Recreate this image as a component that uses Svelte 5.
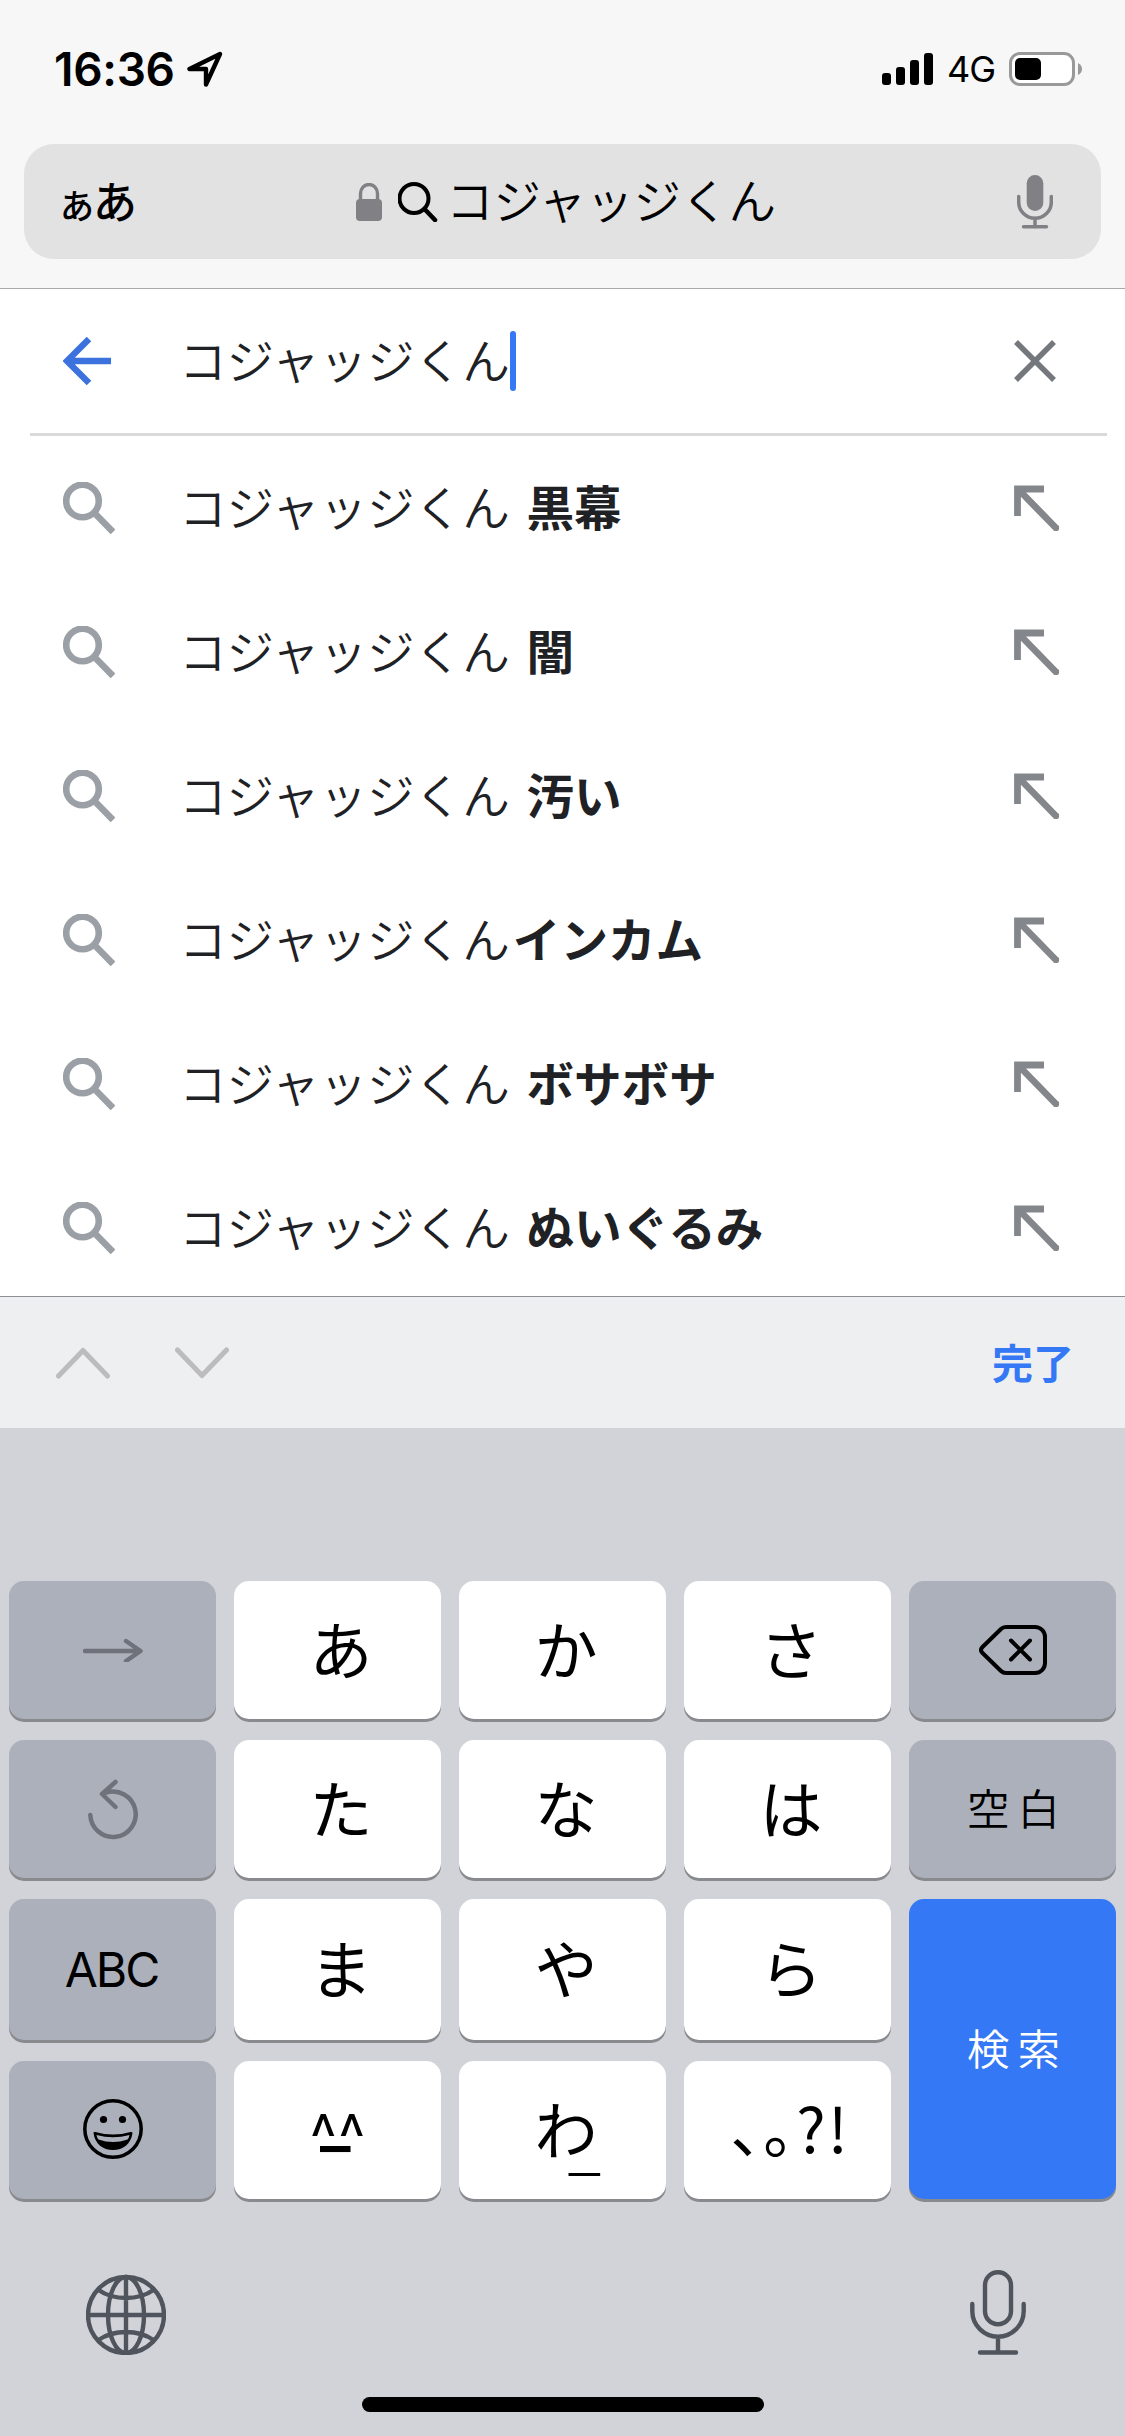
<script lang="ts">
interface Suggestion {
  base: string
  extra: string
}

interface Key {
  label?: string
  icon?: 'next' | 'undo' | 'emoji' | 'delete'
  sub?: string
  kind: 'kana' | 'gray' | 'blue'
  style?: 'abc' | 'word' | 'face' | 'punct'
}

const query = 'コジャッジくん'

const suggestions: Suggestion[] = [
  { base: 'コジャッジくん ', extra: '黒幕' },
  { base: 'コジャッジくん ', extra: '闇' },
  { base: 'コジャッジくん ', extra: '汚い' },
  { base: 'コジャッジくん', extra: 'インカム' },
  { base: 'コジャッジくん ', extra: 'ボサボサ' },
  { base: 'コジャッジくん ', extra: 'ぬいぐるみ' },
]

const keys: Key[] = [
  { icon: 'next', kind: 'gray' },
  { label: 'あ', kind: 'kana' },
  { label: 'か', kind: 'kana' },
  { label: 'さ', kind: 'kana' },
  { icon: 'delete', kind: 'gray' },
  { icon: 'undo', kind: 'gray' },
  { label: 'た', kind: 'kana' },
  { label: 'な', kind: 'kana' },
  { label: 'は', kind: 'kana' },
  { label: '空白', kind: 'gray', style: 'word' },
  { label: 'ABC', kind: 'gray', style: 'abc' },
  { label: 'ま', kind: 'kana' },
  { label: 'や', kind: 'kana' },
  { label: 'ら', kind: 'kana' },
  { label: '検索', kind: 'blue', style: 'word' },
  { icon: 'emoji', kind: 'gray' },
  { label: '^^', sub: '_', kind: 'kana', style: 'face' },
  { label: 'わ', sub: '_', kind: 'kana' },
  { label: '、。?!', kind: 'kana', style: 'punct' },
]

const bars = [12, 18, 25, 32]
</script>

<div class="screen">
	<header class="browser">
		<div class="status">
			<span class="time">16:36</span>
			<svg class="location" width="36" height="36" viewBox="0 0 36 36">
				<path d="M33 3L2.5 18H19V33.5Z" />
			</svg>
			<div class="signal">
				{#each bars as height}
					<i style="height: {height}px"></i>
				{/each}
			</div>
			<span class="network">4G</span>
			<svg class="battery" width="74" height="34" viewBox="0 0 74 34">
				<rect x="1.5" y="1.5" width="63" height="31" rx="9.5" fill="#fff" stroke="#999" stroke-width="3" />
				<rect x="6" y="6" width="26" height="22" rx="5" />
				<path d="M69 11Q73 13 73 17T69 23Z" fill="#999" />
			</svg>
		</div>
		<div class="address">
			<span class="reader"><small>あ</small>あ</span>
			<div class="page-title">
				<svg width="26" height="38" viewBox="0 0 26 38">
					<rect y="16" width="26" height="22" rx="4" fill="#808085" />
					<path d="M4.5 17V10.5a8.5 9 0 0 1 17 0V17" fill="none" stroke="#808085" stroke-width="3.4" />
				</svg>
				<svg width="40" height="40" viewBox="0 0 40 40">
					<circle cx="16" cy="16.5" r="14.5" fill="none" stroke="#000" stroke-width="4" />
					<path d="M26.5 27L37 38" stroke="#000" stroke-width="4.6" stroke-linecap="round" />
				</svg>
				<span>{query}</span>
			</div>
			<svg class="voice" width="36" height="54" viewBox="0 0 36 54">
				<rect x="9.7" width="16.6" height="36" rx="8.3" fill="#808085" />
				<path d="M1.7 21.5V27a16.3 16.3 0 0 0 32.6 0V21.5M18 43V52M6.5 51.7H29.5" />
			</svg>
		</div>
	</header>

	<main>
		<div class="search-row">
			<svg class="back" width="48" height="48" viewBox="0 0 48 48">
				<path d="M48 24H4M26 2L4 24L26 46" />
			</svg>
			<span class="query">{query}</span><span class="caret"></span>
			<svg class="clear" width="42" height="42" viewBox="0 0 42 42">
				<path d="M2 2L40 40M40 2L2 40" />
			</svg>
		</div>
		<ul>
			{#each suggestions as item}
				<li>
					<svg class="lens" width="52" height="52" viewBox="0 0 52 52">
						<circle cx="19.5" cy="19" r="16.3" />
						<path d="M31 30.5L50 50" />
					</svg>
					<span class="suggestion">{item.base}<b>{item.extra}</b></span>
					<svg class="fill" width="46" height="46" viewBox="0 0 46 46">
						<path d="M30 4H3.5V31M4 4L42 43" />
						<circle cx="42" cy="43" r="3.2" />
					</svg>
				</li>
			{/each}
		</ul>
	</main>

	<div class="toolbar">
		<svg width="54" height="32" viewBox="0 0 54 32"><path d="M2.5 29L27 3.5L51.5 29" /></svg>
		<svg width="54" height="32" viewBox="0 0 54 32"><path d="M2.5 3L27 28.5L51.5 3" /></svg>
		<span class="done">完了</span>
	</div>

	<div class="keyboard">
		<div class="keys">
			{#each keys as key}
				<div class="key {key.kind} {key.style ?? ''}">
					{#if key.icon === 'next'}
						<svg class="dim" width="60" height="24" viewBox="0 0 60 24">
							<path d="M2 13H57M43 3L57.5 13L43 23" />
						</svg>
					{:else if key.icon === 'undo'}
						<svg class="dim" width="50" height="62" viewBox="0 0 50 62">
							<path d="M2.3 37a22.7 22.7 0 1 0 15.5-22.3M27.5 4L14 16L27.5 29" />
						</svg>
					{:else if key.icon === 'delete'}
						<svg class="dark" width="68" height="52" viewBox="0 -1 68 52">
							<path d="M27 2H56a10 10 0 0 1 10 10V38a10 10 0 0 1-10 10H27q-3 0-5-2L3.5 28q-3-3 0-6L22 4q2-2 5-2ZM32 15.5L51 34.5M51 15.5L32 34.5" />
						</svg>
					{:else if key.icon === 'emoji'}
						<svg width="60" height="62" viewBox="0 0 60 62">
							<circle cx="30" cy="30" r="28.2" fill="none" stroke="#000" stroke-width="3.5" />
							<circle cx="20.5" cy="20.5" r="3.6" />
							<circle cx="39.5" cy="20.5" r="3.6" />
							<path d="M10.5 34Q10.5 32.5 12.5 33Q30 38 47.500 33Q49.5 32.5 49.5 34C48 45 40 51 30 51S12 45 10.5 34Z" />
							<path d="M13.5 36Q30 40.5 46.5 36Q46 39 44.5 40.5Q30 45.5 15.5 40.5Q14 39 13.5 36Z" fill="#abb0bb" />
						</svg>
					{:else}
						<span class="label">{key.label}{#if key.sub}<em>{key.sub}</em>{/if}</span>
					{/if}
				</div>
			{/each}
		</div>
		<div class="dock">
			<svg width="80" height="84" viewBox="0 -4 80 84">
				<circle cx="40" cy="40" r="38" />
				<ellipse cx="40" cy="40" rx="18" ry="38" />
				<path d="M40 2V78M2 40H78M12.5 15Q24 23 40 23T67.5 15M12.5 65Q24 57 40 57T67.5 65" />
			</svg>
			<svg width="56" height="86" viewBox="0 0 56 86">
				<rect x="15" y="2.2" width="26" height="52" rx="13" />
				<path d="M2.3 34V41a25.7 25.7 0 0 0 51.4 0V34M28 67V82M10 82.5H46" />
			</svg>
		</div>
		<div class="home"></div>
	</div>
</div>

<style>
	:global(body) {
		margin: 0;
		background: #fff;
	}

	.screen {
		width: 1125px;
		height: 2436px;
		overflow: hidden;
		display: flex;
		flex-direction: column;
		font-family: 'Noto Sans CJK JP', sans-serif;
		color: #000;
	}

	svg {
		display: block;
		flex-shrink: 0;
	}

	.browser {
		height: 288px;
		background: #f7f7f7;
		border-bottom: 1px solid #a9a9ab;
	}

	.status {
		height: 144px;
		padding: 0 42px 6px 54px;
		box-sizing: border-box;
		display: flex;
		align-items: center;
		font-family: Inter, sans-serif;
	}

	.time {
		width: 133px;
		font-size: 46px;
		font-weight: 600;
		letter-spacing: -0.3px;
	}

	.location path {
		fill: none;
		stroke: #000;
		stroke-width: 4.4;
		stroke-linejoin: round;
	}

	.signal {
		margin-left: auto;
		display: flex;
		align-items: flex-end;
		gap: 5px;
	}

	.signal i {
		width: 9px;
		border-radius: 3px;
		background: #000;
	}

	.network {
		width: 62px;
		margin-left: 14px;
		font-size: 36px;
		letter-spacing: -1px;
	}

	.address {
		height: 115px;
		margin: 0 24px;
		padding: 0 48px 0 36px;
		border-radius: 30px;
		background: #e2e2e3;
		display: flex;
		align-items: center;
	}

	.reader {
		width: 296px;
		padding-bottom: 4px;
		font-size: 44px;
		font-weight: 500;
		line-height: 1;
		white-space: nowrap;
	}

	.reader small {
		font-size: 34px;
		letter-spacing: -1px;
	}

	.page-title {
		display: flex;
		align-items: center;
		font-size: 47.5px;
		font-weight: 350;
		line-height: 1;
	}

	.page-title span {
		padding-bottom: 6px;
	}

	.page-title svg + svg {
		margin: 0 8px 0 16px;
	}

	.voice {
		margin-left: auto;
	}

	.voice path {
		fill: none;
		stroke: #808085;
		stroke-width: 3.5;
		stroke-linecap: round;
	}

	main {
		height: 1007px;
		overflow: hidden;
		color: #202124;
		font-size: 47.6px;
		font-weight: 350;
		line-height: 60px;
	}

	.search-row {
		height: 144px;
		margin: 0 18px 0 30px;
		padding: 0 51px 0 33px;
		border-bottom: 3px solid #dadada;
		display: flex;
		align-items: center;
	}

	.query {
		margin-left: 68px;
		padding-bottom: 5px;
	}

	.caret {
		width: 6px;
		height: 60px;
		border-radius: 3px;
		background: #3478f6;
	}

	.back path {
		fill: none;
		stroke: #3b72de;
		stroke-width: 6.4;
	}

	.clear {
		margin-left: auto;
	}

	.clear path {
		stroke: #74777c;
		stroke-width: 5.5;
	}

	ul {
		margin: 0;
		padding: 0;
		list-style: none;
	}

	li {
		height: 144px;
		padding: 0 65px 0 63px;
		display: flex;
		align-items: center;
	}

	.lens {
		fill: none;
		stroke: #9aa0a6;
		stroke-width: 6.6;
	}

	.suggestion {
		margin-left: 64px;
		padding-bottom: 5px;
		white-space: pre;
		word-spacing: 3px;
	}

	.suggestion b {
		margin-left: 3px;
		font-weight: 700;
	}

	.fill {
		margin-left: auto;
		fill: #83878c;
	}

	.fill path {
		fill: none;
		stroke: #83878c;
		stroke-width: 6.8;
	}

	.toolbar {
		height: 131px;
		padding: 0 51px 0 56px;
		border-top: 1px solid #8e8f94;
		background: #eeeff1;
		display: flex;
		align-items: center;
		gap: 65px;
	}

	.toolbar path {
		fill: none;
		stroke: #bcbcbd;
		stroke-width: 5;
		stroke-linecap: round;
		stroke-linejoin: round;
	}

	.done {
		margin-left: auto;
		padding-bottom: 4px;
		color: #3478f6;
		font-size: 41px;
		font-weight: 700;
	}

	.keyboard {
		flex: 1;
		padding-top: 153px;
		background: #d2d3d8;
	}

	.keys {
		padding: 0 9px;
		display: grid;
		grid-template-columns: repeat(5, 207px);
		grid-template-rows: 138px 138px 141px 138px;
		gap: 21px 18px;
	}

	.key {
		border-radius: 15px;
		box-shadow: 0 3px 0 #898a8e;
		display: flex;
		align-items: center;
		justify-content: center;
	}

	.kana {
		background: #fff;
		font-size: 63px;
		line-height: 1;
	}

	.kana .label {
		padding: 0 0 8px 7px;
	}

	.gray {
		background: #abb0bb;
	}

	.blue {
		grid-row: span 2;
		background: #3478f6;
		color: #fff;
	}

	.label {
		position: relative;
	}

	/* underscore hangs below the main glyph */
	.label em {
		position: absolute;
		left: 41px;
		top: 16px;
		font-family: Inter, sans-serif;
		font-size: 72px;
		font-style: normal;
		font-weight: 200;
	}

	.word {
		font-size: 42.5px;
		font-weight: 350;
		letter-spacing: 8px;
		text-indent: 10px;
	}

	.word .label {
		padding-bottom: 5px;
	}

	.abc {
		font-family: Inter, sans-serif;
		font-size: 48px;
		letter-spacing: -2px;
	}

	.abc .label {
		padding-right: 2px;
	}

	.face {
		font-size: 50px;
		font-weight: 500;
	}

	.kana.face .label {
		padding: 0;
	}

	.face .label em {
		left: 11px;
		top: -16px;
		font-size: 66px;
		font-weight: 500;
	}

	.kana.punct {
		font-size: 62px;
		font-feature-settings: 'halt';
		letter-spacing: 2px;
	}

	.punct .label {
		padding-left: 5px;
	}

	.dim {
		fill: none;
		stroke: #6f727b;
		stroke-width: 4.5;
		stroke-linecap: round;
		stroke-linejoin: round;
	}

	.dark {
		fill: none;
		stroke: #000;
		stroke-width: 4;
		stroke-linecap: round;
	}

	.dock {
		height: 86px;
		margin-top: 71px;
		padding: 0 99px 0 86px;
		display: flex;
		align-items: center;
		justify-content: space-between;
	}

	.dock svg {
		fill: none;
		stroke: #50545c;
		stroke-width: 4.4;
		stroke-linecap: round;
	}

	.home {
		width: 402px;
		height: 15px;
		margin: 41px auto 0;
		border-radius: 8px;
		background: #000;
	}
</style>
